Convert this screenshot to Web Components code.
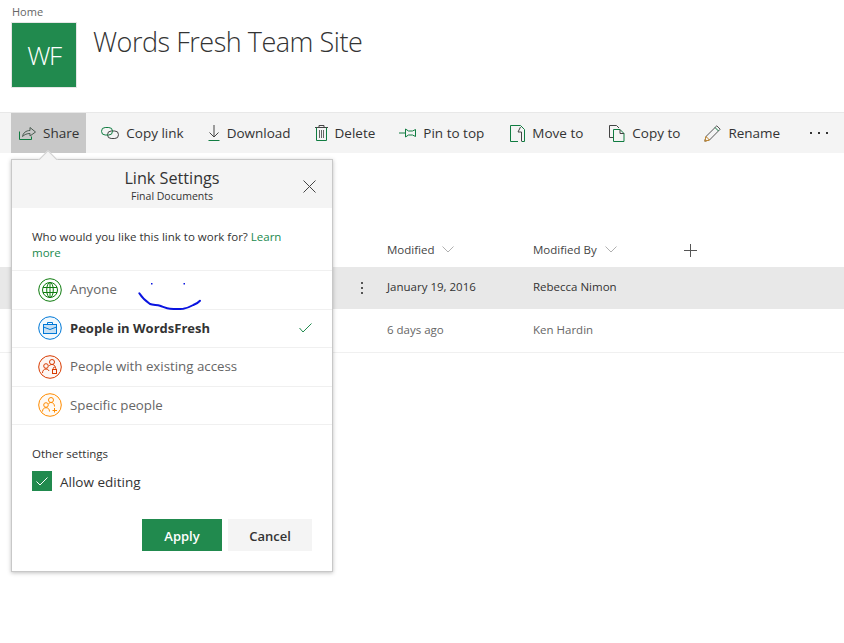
<!DOCTYPE html>
<html lang="en">
<head>
<meta charset="utf-8">
<title>Link Settings</title>
<style>
    html, body { margin: 0; padding: 0; background: #fff; }
    body { font-family: "Open Sans", "Liberation Sans", sans-serif; color: #333; height: 643px; overflow: hidden; position: relative; }
</style>
</head>
<body>
<site-header title-text="Words Fresh Team Site" initials="WF"></site-header>
<command-bar>
    <command-button active label="Share" w="18">
        <svg slot="icon" width="17" height="14" viewBox="0 0 17 14" fill="none"><path d="M.5 5.500v8h12v-3" stroke="#107c41"/><path d="M3.500 10.500c.5-3.500 3.500-6 7.500-6V1.500l5.500 4.500-5.500 4V7.500c-3 0-5.500 1-7.500 3z" stroke="#4a5a50"/></svg>
    </command-button>
    <command-button label="Copy link" w="18">
        <svg slot="icon" width="18" height="12" viewBox="0 0 18 12" fill="none"><rect x="6.500" y="4" width="11" height="7.500" rx="3.700" stroke="#444"/><rect x=".5" y=".5" width="11" height="7.500" rx="3.700" stroke="#107c41"/></svg>
    </command-button>
    <command-button label="Download" w="13">
        <svg slot="icon" width="12" height="16" viewBox="0 0 12 16" fill="none"><path d="M6 0v11.500M1.500 7.500L6 12l4.500-4.500" stroke="#444"/><path d="M.5 15.500h11" stroke="#107c41"/></svg>
    </command-button>
    <command-button label="Delete" w="14">
        <svg slot="icon" width="13" height="16" viewBox="0 0 13 16" fill="none"><path d="M0 2.500h13M4 2.500V.5h5v2" stroke="#444"/><path d="M1.500 2.500v13h10v-13" stroke="#107c41"/><path d="M4.500 5v8M6.500 5v8M8.500 5v8" stroke="#666"/></svg>
    </command-button>
    <command-button label="Pin to top" w="18">
        <svg slot="icon" width="17" height="10" viewBox="0 0 17 10" fill="none"><path d="M0 5h6" stroke="#107c41"/><path d="M6.500 1l3 2h4l3-1.500v7L13.500 7h-4l-3 2z" stroke="#107c41"/></svg>
    </command-button>
    <command-button label="Move to" w="18">
        <svg slot="icon" width="15" height="17" viewBox="0 0 15 17" fill="none"><path d="M8 16.500H.5V.5h10" stroke="#107c41"/><path d="M10.500.5l4 4v12H12" stroke="#107c41"/><path d="M10.500 2L8 7h3.500v9.500" stroke="#444"/></svg>
    </command-button>
    <command-button label="Copy to" w="19">
        <svg slot="icon" width="16" height="17" viewBox="0 0 16 17" fill="none"><path d="M4 12.500H.5V.5h7l2.500 2.500" stroke="#444"/><path d="M4.500 4.500h6.500l4 4v8h-10.500z" stroke="#107c41"/><path d="M11 4.500v4h4" stroke="#444"/></svg>
    </command-button>
    <command-button label="Rename" w="18">
        <svg slot="icon" width="17" height="17" viewBox="0 0 17 17" fill="none"><path d="M.8 16.200l1.200-4.700L12.800.8l3.400 3.400L5.500 15z" stroke="#555"/><path d="M2 11.500L5.500 15 .8 16.200z" stroke="#c98a2b"/><path d="M11 2.500l3.500 3.500" stroke="#107c41"/></svg>
    </command-button>
    <overflow-dots></overflow-dots>
</command-bar>
<file-list>
    <list-row tone="hover" modified="January 19, 2016" by="Rebecca Nimon" menu></list-row>
    <list-row tone="muted" modified="6 days ago" by="Ken Hardin"></list-row>
</file-list>
<link-settings>
    <audience-option label="Anyone">
        <svg slot="icon" width="24" height="24" viewBox="0 0 24 24" fill="none" stroke="#107c10"><circle cx="12" cy="12" r="11.300"/><circle cx="12" cy="12" r="7.500"/><ellipse cx="12" cy="12" rx="3.300" ry="7.500"/><path d="M5 9.500h14M5 14.500h14M12 4.500v15"/></svg>
    </audience-option>
    <audience-option label="People in WordsFresh" selected>
        <svg slot="icon" width="24" height="24" viewBox="0 0 24 24" fill="none" stroke="#0078d7"><circle cx="12" cy="12" r="11.300" fill="#f3f9fd"/><rect x="5.500" y="8.500" width="13" height="9" fill="#c7e0f4"/><path d="M9.500 8.500v-2h5v2M5.500 11l6.500 2.500 6.500-2.500"/></svg>
    </audience-option>
    <audience-option label="People with existing access">
        <svg slot="icon" width="24" height="24" viewBox="0 0 24 24" fill="none" stroke="#d83b01"><circle cx="12" cy="12" r="11.300" fill="#fdf6f3"/><circle cx="14" cy="7" r="2.500"/><circle cx="8" cy="11" r="2.300"/><path d="M4.500 18c0-2.500 1.500-4 3.500-4 1.500 0 2.500.7 3 2M11 11c.8-1 1.800-1.500 3-1.500 1.500 0 3 .8 3.500 3"/><rect x="14.500" y="14.500" width="4" height="4"/><path d="M15.200 14.500v-1a1.300 1.300 0 0 1 2.600 0v1"/></svg>
    </audience-option>
    <audience-option label="Specific people">
        <svg slot="icon" width="24" height="24" viewBox="0 0 24 24" fill="none" stroke="#ff8c00"><circle cx="12" cy="12" r="11.300" fill="#fffaf4"/><circle cx="13" cy="7" r="2.500"/><circle cx="8" cy="12" r="2.300"/><path d="M4.500 18.500c0-2.500 1.500-3.800 3.500-3.800s3.500 1.300 3.500 3.800M10.500 11c.5-1 1.500-1.500 2.500-1.500 2 0 3.500 1.500 3.500 4M16.500 15v4.500M14.500 17.500h4.500"/></svg>
    </audience-option>
</link-settings>
<ink-scribble></ink-scribble>
<script>
class SiteHeader extends HTMLElement {
    constructor () {
        super();
        this.attachShadow({ mode: 'open' });
        this.shadowRoot.innerHTML = `
            <style>
                :host { display: block; height: 112px; box-sizing: border-box; padding: 4px 0 0 12px; }
                .home { font-size: 11px; line-height: 15px; color: #666; height: 19px; }
                .row { display: flex; gap: 17px; align-items: flex-start; }
                .logo { width: 64px; height: 64px; background: #218a4e; outline: 1px solid #e6e6e6; color: #fff; font-weight: 300; font-size: 26px;
                    display: flex; align-items: center; justify-content: center; letter-spacing: -1.500px; }
                h1 { margin: 0; font-weight: 300; font-size: 27px; line-height: 38px; color: #333; letter-spacing: -.48px; }
            </style>
            <div class="home">Home</div>
            <div class="row">
                <div class="logo">${this.getAttribute('initials')}</div>
                <h1>${this.getAttribute('title-text')}</h1>
            </div>`;
    }
}
customElements.define('site-header', SiteHeader);

class CommandBar extends HTMLElement {
    constructor () {
        super();
        this.attachShadow({ mode: 'open' });
        this.shadowRoot.innerHTML = `
            <style>
                :host { display: flex; height: 41px; box-sizing: border-box; background: #f4f4f4; border-top: 1px solid #e8e8e8; padding-left: 11px; gap: 8px; }
            </style>
            <slot></slot>`;
    }
}
customElements.define('command-bar', CommandBar);

class CommandButton extends HTMLElement {
    constructor () {
        super();
        this.attachShadow({ mode: 'open' });
        this.shadowRoot.innerHTML = `
            <style>
                :host { display: flex; align-items: center; padding: 0 8px 0 7px; gap: 7px; font-size: 13.500px; color: #333; }
                :host([active]) { background: #c8c8c8; padding-right: 7px; }
                .icon { display: flex; justify-content: flex-end; align-items: center; width: ${this.getAttribute('w')}px; }
            </style>
            <span class="icon"><slot name="icon"></slot></span>
            <span>${this.getAttribute('label')}</span>`;
    }
}
customElements.define('command-button', CommandButton);

class OverflowDots extends HTMLElement {
    constructor () {
        super();
        this.attachShadow({ mode: 'open' });
        this.shadowRoot.innerHTML = `
            <style>
                :host { display: flex; align-items: center; margin-left: 14px; }
            </style>
            <svg width="18" height="4" viewBox="0 0 18 4" fill="#333"><rect y="1" width="2" height="2"/><rect x="8" y="1" width="2" height="2"/><rect x="16" y="1" width="2" height="2"/></svg>`;
    }
}
customElements.define('overflow-dots', OverflowDots);

const chevron = '<svg width="12" height="7" viewBox="0 0 12 7" fill="none"><path d="M.5.5L6 6l5.500-5.500" stroke="#b0b0b0"/></svg>';

class FileList extends HTMLElement {
    constructor () {
        super();
        this.attachShadow({ mode: 'open' });
        this.shadowRoot.innerHTML = `
            <style>
                :host { display: block; padding-top: 80px; }
                .head { display: grid; grid-template-columns: 387px 146px 146px 1fr; height: 34px; font-size: 11.500px; color: #444; align-items: center; }
                .cell { display: flex; gap: 8px; align-items: center; grid-column: 2; padding-bottom: 2px; }
                .cell + .cell { grid-column: 3; }
                .add { grid-column: 4; padding-left: 5px; display: flex; }
            </style>
            <div class="head">
                <span class="cell">Modified ${chevron}</span>
                <span class="cell">Modified By ${chevron}</span>
                <span class="add"><svg width="13" height="13" viewBox="0 0 13 13" fill="none"><path d="M6.500 0v13M0 6.500h13" stroke="#555"/></svg></span>
            </div>
            <slot></slot>`;
    }
}
customElements.define('file-list', FileList);

class ListRow extends HTMLElement {
    constructor () {
        super();
        this.attachShadow({ mode: 'open' });
        const menu = this.hasAttribute('menu')
            ? '<svg width="2" height="12" viewBox="0 0 2 12" fill="#555"><rect width="2" height="2"/><rect y="5" width="2" height="2"/><rect y="10" width="2" height="2"/></svg>'
            : '';
        this.shadowRoot.innerHTML = `
            <style>
                :host { display: grid; grid-template-columns: 361px 26px 146px 1fr; align-items: center; height: 44px; box-sizing: border-box; padding-bottom: 3px; font-size: 11.500px; color: #333; border-bottom: 1px solid #f0f0f0; }
                :host([tone="hover"]) { background: #e8e8e8; height: 42px; border-bottom: 0; }
                :host([tone="muted"]) { color: #666; }
                .menu { grid-column: 2; display: flex; padding-top: 3px; }
            </style>
            <span class="menu">${menu}</span>
            <span>${this.getAttribute('modified')}</span>
            <span>${this.getAttribute('by')}</span>`;
    }
}
customElements.define('list-row', ListRow);

class LinkSettings extends HTMLElement {
    constructor () {
        super();
        this.attachShadow({ mode: 'open' });
        this.shadowRoot.innerHTML = `
            <style>
                :host { position: absolute; left: 11px; top: 159px; width: 322px; height: 413px; box-sizing: border-box; background: #fff; border: 1px solid #c8c8c8; box-shadow: 0 1px 4px rgba(0,0,0,.25); display: flex; flex-direction: column; }
                .beak { position: absolute; left: 29px; top: -7px; width: 14px; height: 14px; background: #f4f4f4; transform: rotate(45deg); border: 1px solid #d0d0d0; border-right: 0; border-bottom: 0; box-sizing: border-box; }
                header { position: relative; height: 48px; background: #f4f4f4; text-align: center; padding-top: 8px; box-sizing: border-box; }
                .title { font-size: 16.200px; line-height: 21px; color: #333; }
                .sub { font-size: 10.500px; line-height: 14px; color: #333; }
                .close { position: absolute; right: 16px; top: 20px; display: flex; }
                .ask { font-size: 11.500px; line-height: 16px; padding: 21px 20px 9px; color: #333; }
                a { color: #218a4e; text-decoration: none; }
                .options { border-bottom: 1px solid #f0f0f0; }
                .other { font-size: 11.500px; line-height: 16px; padding: 21px 20px 0; color: #333; }
                .allow { display: flex; align-items: center; gap: 8px; padding: 9px 20px 0; font-size: 13.500px; color: #333; }
                .allow span + span { padding-top: 2px; }
                .box { width: 20px; height: 20px; background: #218a4e; display: flex; align-items: center; justify-content: center; }
                .actions { display: flex; justify-content: flex-end; gap: 6px; padding: 28px 20px 0; }
                .btn { height: 32px; box-sizing: border-box; padding-top: 2px; display: flex; align-items: center; justify-content: center; font-size: 13px; font-weight: 600; }
                .apply { width: 80px; background: #218a4e; color: #fff; }
                .cancel { width: 84px; background: #f4f4f4; color: #333; }
            </style>
            <span class="beak"></span>
            <header>
                <div class="title">Link Settings</div>
                <div class="sub">Final Documents</div>
                <span class="close"><svg width="13" height="13" viewBox="0 0 13 13" fill="none"><path d="M.5.500l12 12M12.500.5l-12 12" stroke="#444"/></svg></span>
            </header>
            <div class="ask">Who would you like this link to work for? <a>Learn</a> <a>more</a></div>
            <div class="options"><slot></slot></div>
            <div class="other">Other settings</div>
            <div class="allow">
                <span class="box"><svg width="12" height="9" viewBox="0 0 12 9" fill="none"><path d="M.5 4.500l3.500 3.500L11.500.5" stroke="#fff"/></svg></span>
                <span>Allow editing</span>
            </div>
            <div class="actions">
                <span class="btn apply">Apply</span>
                <span class="btn cancel">Cancel</span>
            </div>`;
    }
}
customElements.define('link-settings', LinkSettings);

class AudienceOption extends HTMLElement {
    constructor () {
        super();
        this.attachShadow({ mode: 'open' });
        this.shadowRoot.innerHTML = `
            <style>
                :host { display: flex; align-items: center; height: 38.500px; box-sizing: border-box; border-top: 1px solid #f0f0f0; padding: 0 20px 0 26px; gap: 8px; font-size: 13.300px; color: #666; }
                :host([selected]) { color: #333; font-weight: 700; font-size: 13px; }
                .icon { display: flex; width: 24px; }
                .label { flex: 1; margin-top: -1px; }
                .tick { display: none; }
                :host([selected]) .tick { display: flex; }
            </style>
            <span class="icon"><slot name="icon"></slot></span>
            <span class="label">${this.getAttribute('label')}</span>
            <span class="tick"><svg width="13" height="10" viewBox="0 0 13 10" fill="none"><path d="M.5 5l3.500 4L12.500.5" stroke="#218a4e"/></svg></span>`;
    }
}
customElements.define('audience-option', AudienceOption);

// the hand drawn smiley lies on top of the popup
class InkScribble extends HTMLElement {
    constructor () {
        super();
        this.attachShadow({ mode: 'open' });
        this.shadowRoot.innerHTML = `
            <style>
                :host { position: absolute; left: 135px; top: 280px; pointer-events: none; display: block; }
                svg { display: block; }
            </style>
            <svg width="70" height="34" viewBox="0 0 70 34" fill="none">
                <path d="M4.300 13.300C6 16 9 20 15 24c3 1.200 7 .7 10 1.700 4 1.400 7 3 10 3 5 .3 9 .3 13.300 0 4-.5 7-2 10-3.700 3-1 5-2.500 6.700-4.300" stroke="#0a14e0" stroke-width="2" stroke-linecap="round" stroke-linejoin="round"/>
                <rect x="16" y="3" width="1.500" height="1.500" fill="#0a14e0"/>
                <rect x="48.500" y="3" width="1.500" height="1.500" fill="#0a14e0"/>
            </svg>`;
    }
}
customElements.define('ink-scribble', InkScribble);
</script>
</body>
</html>
